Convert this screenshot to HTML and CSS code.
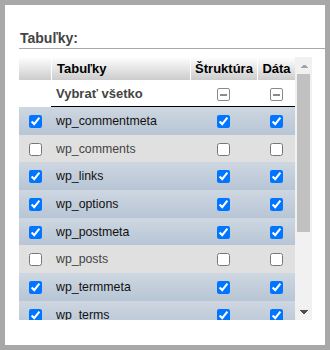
FILE: index.html
```html
<!DOCTYPE html>
<html lang="sk">

<head>
    <meta charset="UTF-8">
    <meta name="viewport" content="width=device-width, initial-scale=1.0">
    <title>Export</title>
    <link rel="stylesheet" href="styles.css">
</head>

<body>
    <div class="panel">
        <div class="legend">Tabuľky:</div>

        <div class="table-wrap">
            <div class="table-view">
                <table class="export-tables">
                    <thead>
                        <tr>
                            <th class="col-check"></th>
                            <th class="col-name">Tabuľky</th>
                            <th class="col-struct">Štruktúra</th>
                            <th class="col-data">Dáta</th>
                        </tr>
                    </thead>
                    <tbody>
                        <tr class="select-all">
                            <td class="first"></td>
                            <td class="name">Vybrať všetko</td>
                            <td class="c"><span class="mixed"></span></td>
                            <td class="c"><span class="mixed"></span></td>
                        </tr>
                        <tr class="marked">
                            <td class="c"><input type="checkbox" checked></td>
                            <td class="name">wp_commentmeta</td>
                            <td class="c"><input type="checkbox" checked></td>
                            <td class="c"><input type="checkbox" checked></td>
                        </tr>
                        <tr>
                            <td class="c"><input type="checkbox"></td>
                            <td class="name">wp_comments</td>
                            <td class="c"><input type="checkbox"></td>
                            <td class="c"><input type="checkbox"></td>
                        </tr>
                        <tr class="marked">
                            <td class="c"><input type="checkbox" checked></td>
                            <td class="name">wp_links</td>
                            <td class="c"><input type="checkbox" checked></td>
                            <td class="c"><input type="checkbox" checked></td>
                        </tr>
                        <tr class="marked">
                            <td class="c"><input type="checkbox" checked></td>
                            <td class="name">wp_options</td>
                            <td class="c"><input type="checkbox" checked></td>
                            <td class="c"><input type="checkbox" checked></td>
                        </tr>
                        <tr class="marked">
                            <td class="c"><input type="checkbox" checked></td>
                            <td class="name">wp_postmeta</td>
                            <td class="c"><input type="checkbox" checked></td>
                            <td class="c"><input type="checkbox" checked></td>
                        </tr>
                        <tr>
                            <td class="c"><input type="checkbox"></td>
                            <td class="name">wp_posts</td>
                            <td class="c"><input type="checkbox"></td>
                            <td class="c"><input type="checkbox"></td>
                        </tr>
                        <tr class="marked">
                            <td class="c"><input type="checkbox" checked></td>
                            <td class="name">wp_termmeta</td>
                            <td class="c"><input type="checkbox" checked></td>
                            <td class="c"><input type="checkbox" checked></td>
                        </tr>
                        <tr class="marked">
                            <td class="c"><input type="checkbox" checked></td>
                            <td class="name">wp_terms</td>
                            <td class="c"><input type="checkbox" checked></td>
                            <td class="c"><input type="checkbox" checked></td>
                        </tr>
                    </tbody>
                </table>
            </div>

            <!-- scrollbar -->
            <div class="scrollbar">
                <div class="sb-btn sb-up"></div>
                <div class="sb-track">
                    <div class="sb-thumb"></div>
                </div>
                <div class="sb-btn sb-down"></div>
            </div>
        </div>
    </div>
</body>

</html>
```

FILE: styles.css
```css
* {
    margin: 0;
    padding: 0;
    box-sizing: border-box;
}

html,
body {
    height: 100%;
    overflow: hidden;
    background: #a8a8a8;
    font-family: 'Liberation Sans', Arial, sans-serif;
    font-size: 13px;
}

.panel {
    margin: 5px;
    height: 340px;
    background: #fff;
    padding: 25px 0 0 14px;
}

.legend {
    font-size: 14px;
    font-weight: bold;
    line-height: 16px;
    color: #444;
    padding: 0 0 2px 1px;
    border-bottom: 1px solid #aaa;
}

/* Tabuľka + scrollbar */
.table-wrap {
    margin-top: 8px;
    width: 293px;
    height: 263px;
    display: flex;
}

.table-view {
    width: 276px;
    height: 100%;
    overflow: hidden;
}

.scrollbar {
    width: 17px;
    height: 100%;
    background: #f1f1f1;
    display: flex;
    flex-direction: column;
}

.sb-btn {
    height: 17px;
    background-repeat: no-repeat;
    background-size: 8px 4px;
    background-position: center;
}

.sb-up {
    background-image: conic-gradient(from 135deg at 50% 0, #a3a3a3 90deg, transparent 0);
}

.sb-down {
    background-image: conic-gradient(from -45deg at 50% 100%, #505050 90deg, transparent 0);
}

.sb-track {
    flex: 1;
}

.sb-thumb {
    height: 158px;
    margin: 0 2px;
    background: #c1c1c1;
}

.export-tables {
    width: 276px;
    border-collapse: separate;
    border-spacing: 0;
    table-layout: fixed;
}

.export-tables th {
    height: 23px;
    padding: 0 2px;
    background: linear-gradient(#fff, #ccc);
    color: #000;
    font-weight: bold;
    text-align: center;
    border-left: 1px solid #fff;
    white-space: nowrap;
}

.export-tables th.col-check {
    width: 32px;
    border-left: 0;
}

.export-tables th.col-name {
    width: 139px;
    text-align: left;
    padding-left: 5px;
}

.export-tables th.col-struct {
    width: 67px;
}

.export-tables th.col-data {
    width: 38px;
}

.export-tables td {
    height: 27.7px;
    padding: 0 5px;
    vertical-align: middle;
    font-size: 12.35px;
    color: #444;
    background: #e0e0e0;
    white-space: nowrap;
    overflow: hidden;
}

.export-tables td.c {
    text-align: center;
    padding: 0;
}

.export-tables tr.marked td {
    background: linear-gradient(#ced7e1, #b7c5d5);
    color: #111;
}

.export-tables tr.select-all td {
    height: 27px;
    background: #fff;
    border-bottom: 1px solid #000;
}

.export-tables tr.select-all td.first {
    border-bottom: 0;
}

.export-tables tr.select-all td.name {
    font-size: 13px;
    font-weight: bold;
    color: #444;
}

.export-tables input[type="checkbox"] {
    margin: 0;
    width: 13px;
    height: 13px;
    vertical-align: middle;
}

.mixed {
    display: inline-block;
    width: 13px;
    height: 13px;
    border: 1px solid #8a8a8a;
    border-radius: 2px;
    vertical-align: middle;
    position: relative;
    top: 1px;
    background: linear-gradient(#8a8a8a, #8a8a8a) center / 7px 2px no-repeat;
}
```
